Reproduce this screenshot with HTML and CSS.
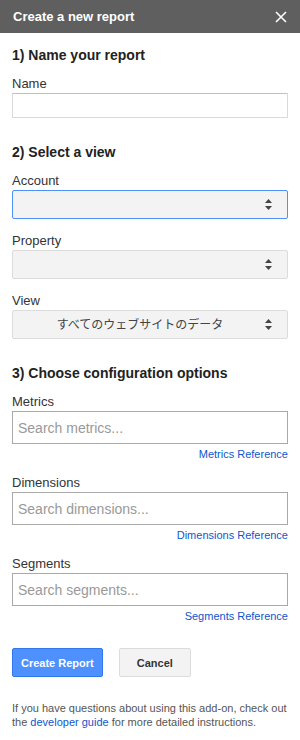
FILE: index.html
```html
<!DOCTYPE html>
<html lang="en">
<head>
    <meta charset="UTF-8">
    <meta name="viewport" content="width=device-width, initial-scale=1.0">
    <title>Create a new report</title>
    <link rel="stylesheet" href="styles.css">
</head>
<body>
    <!-- Barra de título -->
    <div class="titlebar">
        <span class="titlebar-text">Create a new report</span>
        <svg class="close" width="12" height="12" viewBox="0 0 12 12">
            <path d="M1 1 L11 11 M11 1 L1 11" stroke="#fff" stroke-width="1.6"/>
        </svg>
    </div>

    <div class="sidebar">
        <h2 class="section first">1) Name your report</h2>
        <label for="name">Name</label>
        <input type="text" id="name" class="name-input">

        <h2 class="section">2) Select a view</h2>
        <label for="account">Account</label>
        <div class="select-wrap">
            <select id="account" class="focused"><option></option></select>
            <svg class="arrows" width="7" height="11" viewBox="0 0 7 11"><path d="M3.5 0 L7 4 L0 4 Z M0 7 L7 7 L3.5 11 Z" fill="#444"/></svg>
        </div>

        <label for="property" class="spaced">Property</label>
        <div class="select-wrap">
            <select id="property"><option></option></select>
            <svg class="arrows" width="7" height="11" viewBox="0 0 7 11"><path d="M3.5 0 L7 4 L0 4 Z M0 7 L7 7 L3.5 11 Z" fill="#444"/></svg>
        </div>

        <label for="view" class="spaced">View</label>
        <div class="select-wrap">
            <select id="view"><option>すべてのウェブサイトのデータ</option></select>
            <svg class="arrows" width="7" height="11" viewBox="0 0 7 11"><path d="M3.5 0 L7 4 L0 4 Z M0 7 L7 7 L3.5 11 Z" fill="#444"/></svg>
        </div>

        <h2 class="section">3) Choose configuration options</h2>
        <label for="metrics">Metrics</label>
        <input type="text" id="metrics" class="search" placeholder="Search metrics...">
        <div class="ref"><a href="#">Metrics Reference</a></div>

        <label for="dimensions" class="spaced">Dimensions</label>
        <input type="text" id="dimensions" class="search" placeholder="Search dimensions...">
        <div class="ref"><a href="#">Dimensions Reference</a></div>

        <label for="segments" class="spaced">Segments</label>
        <input type="text" id="segments" class="search" placeholder="Search segments...">
        <div class="ref"><a href="#">Segments Reference</a></div>

        <div class="buttons">
            <button type="button" class="action">Create Report</button>
            <button type="button">Cancel</button>
        </div>

        <p class="help">If you have questions about using this add-on, check out the <a href="#">developer guide</a> for more detailed instructions.</p>
    </div>
</body>
</html>
```

FILE: styles.css
```css
/* Estilos globais */
body {
    margin: 0;
    font-family: Arial, "Liberation Sans", sans-serif;
    background-color: #fff;
    color: #333;
}

/* Barra de título */
.titlebar {
    height: 33px;
    background-color: #5f5f5f;
    display: flex;
    align-items: center;
    justify-content: space-between;
    padding: 0 13px 0 13px;
}

.titlebar-text {
    color: #fff;
    font-size: 13px;
    font-weight: bold;
}

.close {
    display: block;
    margin-right: 0;
}

/* Conteúdo */
.sidebar {
    padding: 0 12px;
}

.section {
    font-size: 14px;
    line-height: 18px;
    font-weight: bold;
    color: #222;
    margin: 25px 0 12px 0;
}

.section.first {
    margin-top: 13px;
}

label {
    display: block;
    font-size: 13px;
    line-height: 16px;
    color: #333;
    margin-bottom: 1px;
}

label.spaced {
    margin-top: 14px;
}

.name-input {
    display: block;
    width: 100%;
    height: 25px;
    box-sizing: border-box;
    border: 1px solid #d9d9d9;
    border-top-color: #c0c0c0;
    border-radius: 1px;
    padding: 0 6px;
    margin: 0;
    font-size: 13px;
}

/* Caixas de seleção */
.select-wrap {
    position: relative;
}

.select-wrap select {
    display: block;
    width: 100%;
    height: 29px;
    box-sizing: border-box;
    -webkit-appearance: none;
    appearance: none;
    background-color: #f3f3f3;
    border: 1px solid #dcdcdc;
    border-radius: 2px;
    padding: 0 32px 0 12px;
    margin: 0;
    font-family: Arial, "Noto Sans CJK JP", sans-serif;
    font-size: 12px;
    color: #444;
    text-align: center;
    text-align-last: center;
}

.select-wrap select.focused {
    border-color: #4d90fe;
}

.arrows {
    position: absolute;
    right: 16px;
    top: 9px;
}

/* Campos de busca */
.search {
    display: block;
    width: 100%;
    height: 33px;
    box-sizing: border-box;
    border: 1px solid #a9a9a9;
    padding: 0 5px;
    margin: 0;
    margin-top: 1px;
    font-family: Arial, "Liberation Sans", sans-serif;
    font-size: 14px;
}

.search::placeholder {
    color: #999;
}

.ref {
    text-align: right;
    font-size: 11px;
    line-height: 14px;
    margin-top: 3px;
}

a {
    color: #15c;
    text-decoration: none;
}

/* Botões */
.buttons {
    display: flex;
    gap: 16px;
    margin-top: 25px;
}

.buttons button {
    height: 29px;
    padding: 0 17px;
    border: 1px solid #dcdcdc;
    border-radius: 2px;
    background-color: #f3f3f3;
    color: #333;
    font-family: Arial, "Liberation Sans", sans-serif;
    font-size: 11px;
    font-weight: bold;
    cursor: pointer;
}

.buttons button.action {
    background-color: #4d90fe;
    border-color: #3079ed;
    color: #fff;
    padding: 0 8px;
}

.help {
    font-size: 11px;
    line-height: 14px;
    color: #555;
    margin: 24px 0 0 0;
}
```
